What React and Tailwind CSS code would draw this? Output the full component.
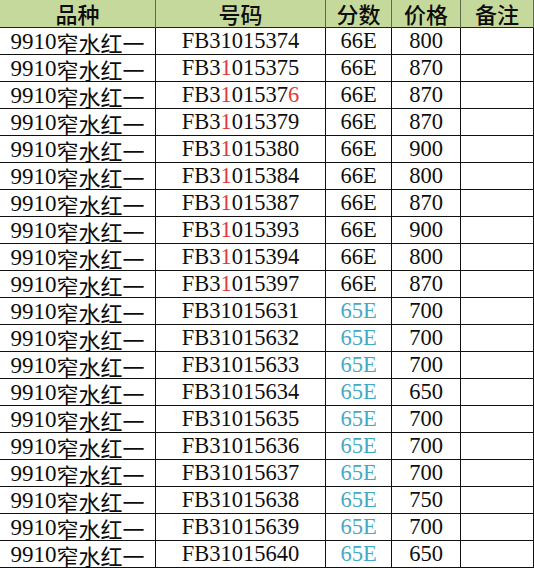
import React from "react";

const rows = [
  ["FB31015374", "66E", "800", 0],
  ["FB31015375", "66E", "870", 1],
  ["FB31015376", "66E", "870", 2],
  ["FB31015379", "66E", "870", 1],
  ["FB31015380", "66E", "900", 1],
  ["FB31015384", "66E", "800", 1],
  ["FB31015387", "66E", "870", 1],
  ["FB31015393", "66E", "900", 1],
  ["FB31015394", "66E", "800", 1],
  ["FB31015397", "66E", "870", 1],
  ["FB31015631", "65E", "700", 0],
  ["FB31015632", "65E", "700", 0],
  ["FB31015633", "65E", "700", 0],
  ["FB31015634", "65E", "650", 0],
  ["FB31015635", "65E", "700", 0],
  ["FB31015636", "65E", "700", 0],
  ["FB31015637", "65E", "700", 0],
  ["FB31015638", "65E", "750", 0],
  ["FB31015639", "65E", "700", 0],
  ["FB31015640", "65E", "650", 0],
];

function Code({ code, mode }) {
  if (mode === 0) return <span>{code}</span>;
  const a = code.slice(0, 3);
  const b = code.slice(3, 4);
  const c = mode === 2 ? code.slice(4, 9) : code.slice(4);
  const d = mode === 2 ? code.slice(9) : "";
  return (
    <span>
      {a}
      <span className="text-[#e0393e]">{b}</span>
      {c}
      {d && <span className="text-[#e0393e]">{d}</span>}
    </span>
  );
}

const cell = "flex items-center justify-center leading-none border-r-[1.5px] border-b-[1.5px] border-[#111]";

export default function App() {
  return (
    <div
      className="w-[534px] h-[568px] bg-white text-[#0d0d0d] overflow-hidden"
      style={{ fontFamily: '"Liberation Serif", "Noto Sans CJK SC", serif' }}
    >
      <div className="grid grid-cols-[156px_170px_66px_69px_73px] grid-rows-[28px_repeat(20,27px)]">
        {["品种", "号码", "分数", "价格", "备注"].map((h) => (
          <div
            key={h}
            className={`${cell} bg-[#c6d99c] text-[22px] font-medium border-r-[#5d6b48] border-b-[#222] pb-[1px]`}
            style={{ fontFamily: '"Noto Sans CJK SC", sans-serif' }}
          >
            {h}
          </div>
        ))}
        {rows.map(([code, score, price, mode], i) => (
          <React.Fragment key={i}>
            <div className={`${cell} text-[23px] pt-[1px]`}>
              <span>9910</span>
              <span style={{ fontFamily: '"Noto Sans CJK SC", sans-serif' }} className="text-[22px]">窄水红一</span>
            </div>
            <div className={`${cell} text-[22.5px] pt-[1px]`}>
              <Code code={code} mode={mode} />
            </div>
            <div className={`${cell} text-[22.5px] pt-[1px] ${score === "65E" ? "text-[#45a8c6]" : ""}`}>{score}</div>
            <div className={`${cell} text-[22.5px] pt-[1px]`}>{price}</div>
            <div className={`${cell}`}></div>
          </React.Fragment>
        ))}
      </div>
    </div>
  );
}
